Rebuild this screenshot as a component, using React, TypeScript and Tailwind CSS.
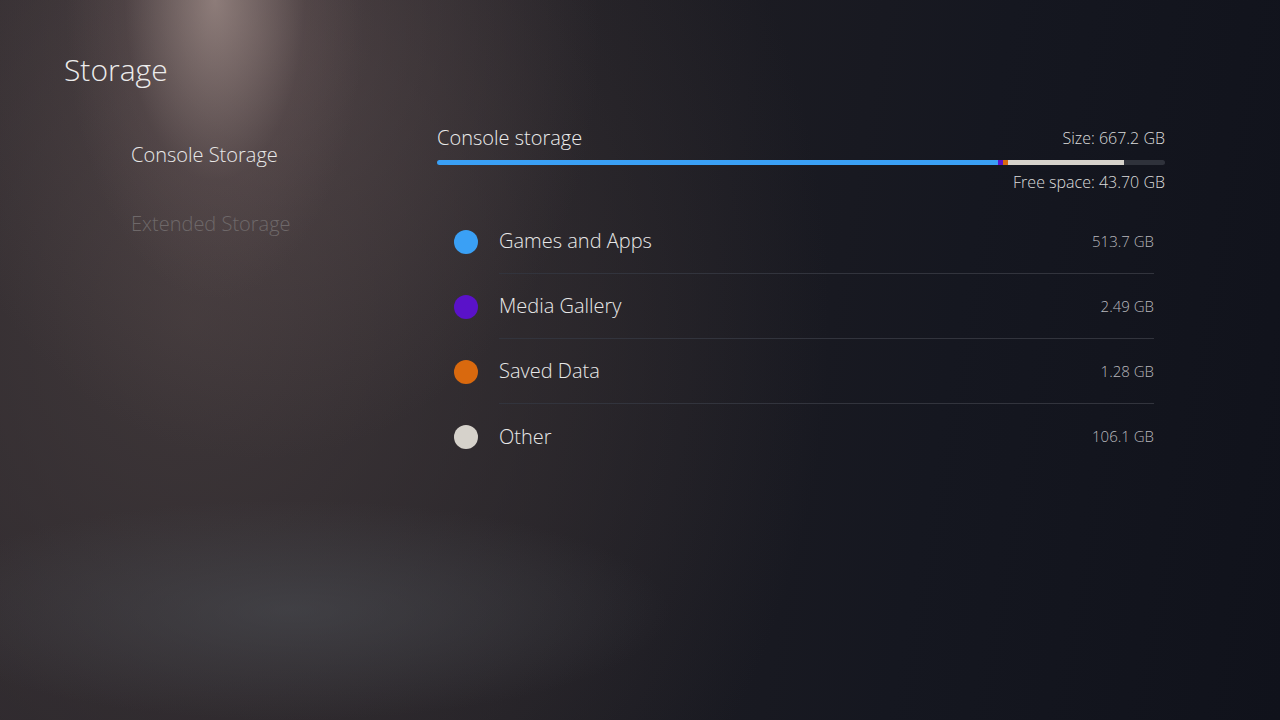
import React from 'react';

const items = [
  { label: 'Games and Apps', size: '513.7 GB', color: 'bg-[#3aa0f5]' },
  { label: 'Media Gallery', size: '2.49 GB', color: 'bg-[#5a12c9]' },
  { label: 'Saved Data', size: '1.28 GB', color: 'bg-[#d9690e]' },
  { label: 'Other', size: '106.1 GB', color: 'bg-[#d6d2cb]' },
];

export default function App() {
  return (
    <div
      className="w-[1280px] h-[720px] overflow-hidden text-[#e6e6e6] font-['Open_Sans','Noto_Sans',sans-serif] font-light bg-[radial-gradient(ellipse_150px_300px_at_215px_0px,rgba(170,150,145,0.7),rgba(120,100,100,0.2)_60%,transparent),radial-gradient(ellipse_340px_420px_at_260px_40px,rgba(110,92,92,0.45),transparent),radial-gradient(ellipse_380px_110px_at_290px_610px,rgba(78,82,88,0.5),transparent),radial-gradient(ellipse_640px_760px_at_190px_320px,rgba(64,56,58,0.95),transparent),linear-gradient(100deg,#29252a,#1e1d23_45%,#151720_72%,#10121b)]"
    >
      <h1 className="pl-[64px] pt-[50px] text-[30px] leading-[40px] text-[#ececec]">Storage</h1>

      <div className="flex mt-[34px]">
        <nav className="w-[437px] pl-[131px] pt-[17px] flex flex-col gap-[41px] text-[20px] leading-[28px]">
          <span className="text-[#e8e8e8]">Console Storage</span>
          <span className="text-[#6e6869]">Extended Storage</span>
        </nav>

        <section className="w-[728px]">
          <div className="flex items-center justify-between h-[28px]">
            <span className="text-[20px] text-[#ececec]">Console storage</span>
            <span className="text-[16px] text-[#dcdcdc]">Size: 667.2 GB</span>
          </div>

          <div className="mt-[8px] h-[5px] rounded-full bg-[#2f323b] flex overflow-hidden">
            <div className="w-[561px] bg-[#3aa0f5]" />
            <div className="w-[5px] bg-[#5a12c9]" />
            <div className="w-[5px] bg-[#d9690e]" />
            <div className="w-[116px] bg-[#d6d2cb]" />
          </div>

          <div className="mt-[6px] text-right text-[16px] leading-[22px] text-[#dcdcdc]">Free space: 43.70 GB</div>

          <ul className="mt-[16px] pl-[17px] pr-[11px]">
            {items.map((it, i) => (
              <li key={it.label} className="flex items-center gap-[21px]">
                <span className={`w-[24px] h-[24px] rounded-full shrink-0 ${it.color}`} />
                <div
                  className={`flex-1 flex items-center justify-between h-[65px] ${
                    i < items.length - 1 ? 'border-b border-[#32343d]' : ''
                  }`}
                >
                  <span className="text-[20px] text-[#e8e8e8]">{it.label}</span>
                  <span className="text-[15px] text-[#b8b8bd]">{it.size}</span>
                </div>
              </li>
            ))}
          </ul>
        </section>
      </div>
    </div>
  );
}
